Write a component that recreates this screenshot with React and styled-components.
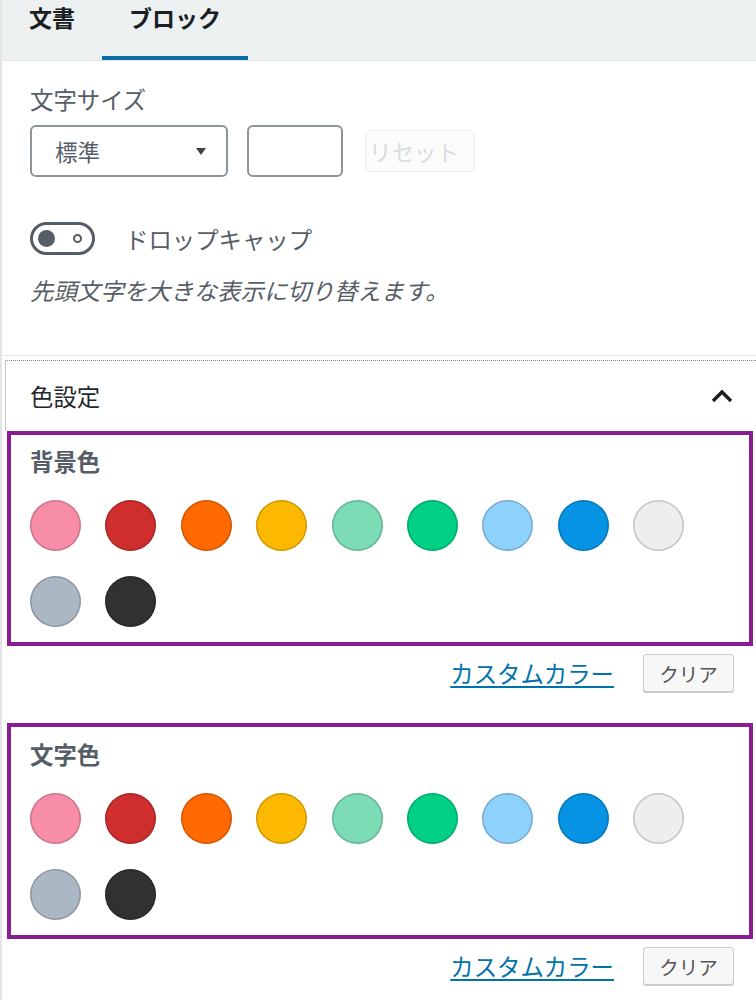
import React from 'react';
import styled, { createGlobalStyle } from 'styled-components';

const GlobalStyle = createGlobalStyle`
  html, body {
    margin: 0;
    padding: 0;
    background: #fff;
  }
  body {
    font-family: "Noto Sans CJK JP", "Noto Sans", sans-serif;
    color: #555d66;
  }
  * { box-sizing: border-box; }
`;

const palette = [
  '#f78da7', '#cf2e2e', '#ff6900', '#fcb900', '#7bdcb5', '#00d084',
  '#8ed1fc', '#0693e3', '#eeeeee', '#abb8c3', '#313131',
];

function App() {
  return (
    <>
      <GlobalStyle />
      <Sidebar>
        <Tabs>
          <Tab>文書</Tab>
          <Tab $active>ブロック</Tab>
        </Tabs>

        <Section>
          <Label>文字サイズ</Label>
          <FontRow>
            <Select>
              <span>標準</span>
              <Caret />
            </Select>
            <NumberBox />
            <ResetButton>リセット</ResetButton>
          </FontRow>

          <ToggleRow>
            <Toggle>
              <Knob />
              <OffMark />
            </Toggle>
            <ToggleLabel>ドロップキャップ</ToggleLabel>
          </ToggleRow>
          <Help>先頭文字を大きな表示に切り替えます。</Help>
        </Section>

        <PanelTitle>
          色設定
          <svg width="24" height="16" viewBox="0 0 24 16">
            <path d="M3 13 L12 4 L21 13" fill="none" stroke="#191e23" strokeWidth="3.4" />
          </svg>
        </PanelTitle>

        <ColorGroup title="背景色" />
        <ColorGroup title="文字色" $second />
      </Sidebar>
    </>
  );
}

function ColorGroup({ title, $second }) {
  return (
    <>
      <Marked $second={$second}>
        <Label>{title}</Label>
        <Swatches>
          {palette.map((c) => (
            <Swatch key={c} $color={c} />
          ))}
        </Swatches>
      </Marked>
      <Actions>
        <CustomLink>カスタムカラー</CustomLink>
        <ClearButton>クリア</ClearButton>
      </Actions>
    </>
  );
}

const Sidebar = styled.div`
  width: 756px;
  height: 1000px;
  overflow: hidden;
  border-left: 2px solid #e2e4e7;
`;

const Tabs = styled.div`
  display: flex;
  height: 61px;
  background: #edf0f0;
  border-bottom: 1px solid #e2e4e7;
`;

const Tab = styled.div`
  width: ${(p) => (p.$active ? '146px' : '100px')};
  height: 60px;
  padding-top: 2px;
  text-align: center;
  font-size: 23px;
  line-height: 30px;
  font-weight: 600;
  color: #191e23;
  box-shadow: ${(p) => (p.$active ? 'inset 0 -4px 0 #0a6ea5' : 'none')};
`;

const Section = styled.div`
  padding: 23px 28px 50px;
  border-bottom: 1px solid #e2e4e7;
`;

const Label = styled.div`
  font-size: 23.4px;
  line-height: 30px;
  color: #555d66;
`;

const FontRow = styled.div`
  display: flex;
  align-items: center;
  margin-top: 11px;
`;

const Select = styled.div`
  width: 198px;
  height: 52px;
  border: 2px solid #8d949b;
  border-radius: 6px;
  display: flex;
  align-items: center;
  justify-content: space-between;
  padding: 0 20px 0 23px;
  font-size: 22.5px;
  color: #555d66;
`;

const Caret = styled.span`
  width: 0;
  height: 0;
  border-left: 5px solid transparent;
  border-right: 5px solid transparent;
  border-top: 7px solid #3c434a;
`;

const NumberBox = styled.div`
  width: 96px;
  height: 52px;
  margin-left: 19px;
  border: 2px solid #8d949b;
  border-radius: 6px;
`;

const ResetButton = styled.div`
  width: 110px;
  height: 42px;
  margin-left: 22px;
  border: 1px solid #ededed;
  border-radius: 4px;
  background: #fbfbfb;
  color: #dadcde;
  font-size: 22.5px;
  display: flex;
  align-items: center;
  padding-left: 3px;
`;

const ToggleRow = styled.div`
  display: flex;
  align-items: center;
  margin-top: 45px;
`;

const Toggle = styled.div`
  width: 65px;
  height: 33px;
  border: 3px solid #555d66;
  border-radius: 17px;
  display: flex;
  align-items: center;
  justify-content: space-between;
  padding: 0 10px 0 5px;
`;

const Knob = styled.span`
  width: 17px;
  height: 17px;
  border-radius: 50%;
  background: #555d66;
`;

const OffMark = styled.span`
  width: 9px;
  height: 9px;
  border-radius: 50%;
  border: 2px solid #555d66;
`;

const ToggleLabel = styled.span`
  margin-left: 30px;
  font-size: 23.4px;
  line-height: 30px;
  color: #555d66;
`;

const Help = styled.div`
  margin-top: 20px;
  font-size: 23.4px;
  line-height: 30px;
  font-style: italic;
  color: #555d66;
`;

const PanelTitle = styled.div`
  margin: 4px 0 0 3px;
  height: 71px;
  border-top: 1px dotted #7e8993;
  border-left: 1px solid #c4c9ce;
  display: flex;
  align-items: center;
  justify-content: space-between;
  padding: 0 22px 0 24px;
  font-size: 23.4px;
  color: #23282d;
`;

const Marked = styled.div`
  margin: ${(p) => (p.$second ? '31px' : '0')} 3px 0 5px;
  border: 4px solid #8b1d92;
  padding: ${(p) => (p.$second ? '12px' : '11px')} 0 15px 19px;

  ${Label} {
    font-weight: 600;
  }
`;

const Swatches = styled.div`
  display: flex;
  flex-wrap: wrap;
  column-gap: 24.4px;
  row-gap: 25px;
  margin-top: 24px;
  width: 700px;
`;

const Swatch = styled.span`
  width: 51px;
  height: 51px;
  border-radius: 50%;
  background: ${(p) => p.$color};
  box-shadow: inset 0 0 0 1.5px rgba(0, 0, 0, 0.18);
`;

const Actions = styled.div`
  display: flex;
  align-items: center;
  justify-content: flex-end;
  gap: 29px;
  margin-top: 8px;
  padding-right: 22px;
`;

const CustomLink = styled.a`
  font-size: 23.4px;
  line-height: 30px;
  color: #0073aa;
  text-decoration: underline;
  text-underline-offset: 3px;
`;

const ClearButton = styled.div`
  width: 91px;
  height: 38px;
  border: 1px solid #ccc;
  border-radius: 3px;
  background: #f7f7f7;
  box-shadow: 0 1px 0 #ccc;
  display: flex;
  align-items: center;
  justify-content: center;
  font-size: 19.5px;
  color: #555;
`;

export default App;
